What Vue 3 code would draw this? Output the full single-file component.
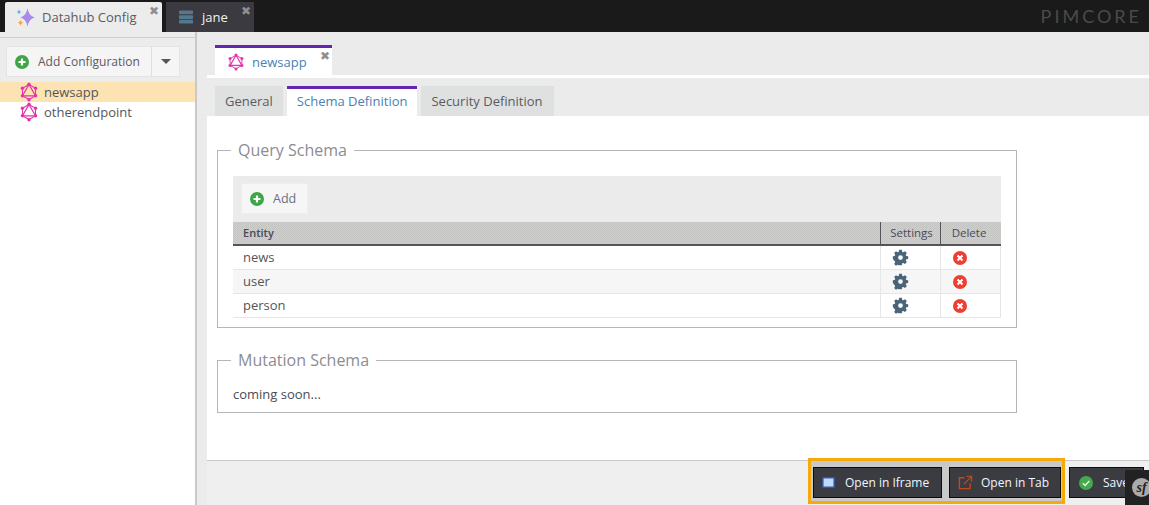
<script setup>
const entities = ['news', 'user', 'person']
const gear = 'M8.4 1h3.2l.4 2.3 1.3.6 2-1.3 2.2 2.2-1.3 2 .6 1.3 2.2.4v3.2l-2.2.5-.6 1.3 1.3 1.9-2.2 2.3-2-1.3-1.3.5-.4 2.3H8.4L8 19l-1.3-.5-2 1.3-2.2-2.3 1.3-1.9-.6-1.3L1 11.800V8.500l2.200-.4.6-1.300-1.300-2 2.200-2.200 2 1.300L8 3.300zM10 7.300a2.800 2.800 0 1 0 0 5.600 2.800 2.800 0 0 0 0-5.600z'
</script>

<template>
  <div class="app">
    <header class="topbar">
      <div class="toptab active">
        <svg class="star" viewBox="0 0 20 20" width="20" height="20">
          <path d="M12.500 1Q13.500 8.500 19.500 10.500 13.500 12.500 12.500 19.500 11.500 12.500 5.500 10.500 11.500 8.500 12.500 1z" fill="#a78bea" />
          <path d="M4 2.500Q4.400 4.600 6.300 5 4.400 5.400 4 7.500 3.600 5.400 1.700 5 3.600 4.600 4 2.500z" fill="#4fb2f0" />
          <path d="M5.500 13Q6 15.300 8 15.800 6 16.300 5.500 18.500 5 16.300 3 15.800 5 15.300 5.500 13z" fill="#f5a13c" />
        </svg>
        <span>Datahub Config</span>
        <i class="close">✖</i>
      </div>
      <div class="toptab dark">
        <svg viewBox="0 0 16 14" width="15" height="14">
          <rect x="0" y="0" width="15" height="4" rx="1" fill="#54788c" />
          <rect x="0" y="5" width="15" height="4" rx="1" fill="#54788c" />
          <rect x="0" y="10" width="15" height="4" rx="1" fill="#54788c" />
        </svg>
        <span>jane</span>
        <i class="close">✖</i>
      </div>
      <div class="logo">PIMCORE</div>
    </header>

    <div class="main">
      <aside class="sidebar">
        <div class="addbar">
          <div class="addbtn">
            <span class="addmain">
              <svg class="ic" viewBox="0 0 14 14" width="14" height="14">
                <circle cx="7" cy="7" r="7" fill="#3fa648" />
                <path d="M7 3.500v7M3.500 7h7" stroke="#fff" stroke-width="2.200" />
              </svg>
              Add Configuration
            </span>
            <span class="addcaret"><b></b></span>
          </div>
        </div>
        <div class="tree-row selected">
          <svg class="gql" viewBox="0 0 20 20" width="20" height="20"><use href="#gql" /></svg>
          <span>newsapp</span>
        </div>
        <div class="tree-row">
          <svg class="gql" viewBox="0 0 20 20" width="20" height="20"><use href="#gql" /></svg>
          <span>otherendpoint</span>
        </div>
      </aside>

      <section class="content">
        <div class="subtabs">
          <div class="subtab">
            <svg class="gql" viewBox="0 0 20 20" width="18" height="18"><use href="#gql" /></svg>
            <span>newsapp</span>
            <i class="close">✖</i>
          </div>
        </div>
        <div class="innertabs">
          <div class="itab">General</div>
          <div class="itab on">Schema Definition</div>
          <div class="itab">Security Definition</div>
        </div>

        <div class="panel">
          <fieldset class="fs">
            <legend>Query Schema</legend>
            <div class="toolbar">
              <div class="tbtn">
                <svg viewBox="0 0 14 14" width="14" height="14">
                  <circle cx="7" cy="7" r="7" fill="#3fa648" />
                  <path d="M7 3.500v7M3.500 7h7" stroke="#fff" stroke-width="2.200" />
                </svg>
                <span>Add</span>
              </div>
            </div>
            <div class="grid-row head">
              <div class="c1">Entity</div>
              <div class="c2">Settings</div>
              <div class="c3">Delete</div>
            </div>
            <div v-for="(e, i) in entities" :key="e" class="grid-row body" :class="{ alt: i === 1 }">
              <div class="c1">{{ e }}</div>
              <div class="c2">
                <svg viewBox="0 0 20 20" width="17" height="17"><path :d="gear" fill="#4a6577" fill-rule="evenodd" /></svg>
              </div>
              <div class="c3">
                <svg viewBox="0 0 14 14" width="14" height="14">
                  <circle cx="7" cy="7" r="7" fill="#ee3f33" />
                  <path d="M4.500 4.500l5 5M9.500 4.500l-5 5" stroke="#fff" stroke-width="2" />
                </svg>
              </div>
            </div>
          </fieldset>

          <fieldset class="fs second">
            <legend>Mutation Schema</legend>
            <div class="soon">coming soon...</div>
          </fieldset>
        </div>

        <footer class="footer">
          <div class="hl">
            <div class="dbtn frame">
              <svg viewBox="0 0 14 14" width="13" height="13">
                <rect x="1" y="2" width="12" height="10" fill="#bcdcfa" stroke="#3a55b4" stroke-width="1.400" />
              </svg>
              <span>Open in Iframe</span>
            </div>
            <div class="dbtn tab">
              <svg viewBox="0 0 16 16" width="15" height="15" fill="none" stroke="#c0491c" stroke-width="1.500">
                <path d="M7 3H1.500v11.500H13V9" />
                <path d="M6 10l8-8M9 1.500h5.500V7" />
              </svg>
              <span>Open in Tab</span>
            </div>
          </div>
          <div class="dbtn save">
            <svg viewBox="0 0 14 14" width="14" height="14">
              <circle cx="7" cy="7" r="7" fill="#45a94e" />
              <path d="M3.800 7.200l2.300 2.300 4.200-4.500" stroke="#e8f6d8" stroke-width="1.500" fill="none" />
            </svg>
            <span>Save</span>
          </div>
          <div class="sf"><span>sf</span></div>
        </footer>
      </section>
    </div>

    <svg class="defs" width="0" height="0">
      <defs>
        <g id="gql">
          <path d="M10 2.500L16.500 6.200v7.600L10 17.500 3.500 13.800V6.200z" fill="none" stroke="#e535ab" stroke-width="1.100" />
          <path d="M10 2.500L16.500 13.800H3.500z" fill="none" stroke="#e535ab" stroke-width="1.300" />
          <g fill="#e535ab">
            <circle cx="10" cy="2.300" r="1.700" />
            <circle cx="16.600" cy="6.200" r="1.700" />
            <circle cx="16.600" cy="13.800" r="1.700" />
            <circle cx="10" cy="17.700" r="1.700" />
            <circle cx="3.400" cy="13.800" r="1.700" />
            <circle cx="3.400" cy="6.200" r="1.700" />
          </g>
        </g>
      </defs>
    </svg>
  </div>
</template>

<style>
html, body { margin: 0; padding: 0; overflow: hidden; }
</style>

<style scoped>
.app {
  width: 1149px;
  height: 505px;
  display: flex;
  flex-direction: column;
  overflow: hidden;
  font-family: "Open Sans", "Liberation Sans", sans-serif;
  font-size: 13px;
  color: #4b4b52;
  background-color: #ebebeb;
  background-image: repeating-conic-gradient(#e8e8e8 0 25%, #eeeeee 0 50%);
  background-size: 2px 2px;
}
.defs { position: absolute; }
.topbar {
  flex: 0 0 32px;
  height: 32px;
  background: #1a1a1a;
  display: flex;
  align-items: flex-end;
  padding-left: 5px;
  gap: 4px;
  box-sizing: border-box;
}
.toptab {
  height: 30px;
  display: flex;
  align-items: center;
  position: relative;
  box-sizing: border-box;
}
.toptab.active {
  width: 157px;
  background: #ececec;
  padding-left: 10px;
  gap: 7px;
  color: #5b5b62;
  border-radius: 2px 2px 0 0;
}
.toptab.dark {
  width: 88px;
  background: #3a3a40;
  color: #f2f2f2;
  padding-left: 13px;
  gap: 8px;
}
.close {
  position: absolute;
  top: 2px;
  right: 3px;
  font-style: normal;
  font-size: 12px;
  line-height: 14px;
  color: #8f8f8f;
  font-family: "DejaVu Sans", sans-serif;
}
.logo {
  margin-left: auto;
  margin-right: 7px;
  align-self: center;
  font-family: "Lato", sans-serif;
  font-weight: 400;
  font-size: 18px;
  letter-spacing: 3px;
  color: #4a4a4a;
}
.main {
  flex: 1;
  display: flex;
  min-height: 0;
}
.sidebar {
  width: 195px;
  flex: none;
  background: #fff;
  border-right: 2px solid #c9c9c9;
}
.addbar {
  height: 50px;
  box-sizing: border-box;
  padding: 14px 0 0 6px;
  background-color: #ececec;
  background-image: linear-gradient(#ececec 5px, #cfcfcf 5px, #cfcfcf 6px, #ececec 6px);
}
.addbtn {
  width: 174px;
  height: 31px;
  background: #f5f5f5;
  border: 1px solid #e4e4e4;
  box-sizing: border-box;
  display: flex;
  font-size: 12px;
  color: #5a5a62;
}
.addmain {
  flex: 1;
  display: flex;
  align-items: center;
  gap: 9px;
  padding-left: 8px;
  border-right: 1px solid #dedede;
}
.addcaret {
  width: 27px;
  display: flex;
  align-items: center;
  justify-content: center;
}
.addcaret b {
  border-left: 5px solid transparent;
  border-right: 5px solid transparent;
  border-top: 5px solid #555;
}
.tree-row {
  height: 20px;
  display: flex;
  align-items: center;
  padding-left: 19px;
  gap: 5px;
  color: #55555c;
}
.tree-row.selected { background: #fde3b2; }
.content {
  flex: 1;
  min-width: 0;
  display: flex;
  flex-direction: column;
  padding-left: 10px;
}
.subtabs {
  height: 46px;
  box-sizing: border-box;
  padding: 13px 0 0 8px;
  border-bottom: 3px solid #fff;
  display: flex;
}
.subtab {
  width: 117px;
  height: 30px;
  background: #fff;
  border-top: 3px solid #6426b0;
  box-sizing: border-box;
  display: flex;
  align-items: center;
  padding: 0 0 0 12px;
  gap: 7px;
  position: relative;
  color: #4a7fb5;
}
.subtab .close { top: 1px; right: 2px; }
.innertabs {
  height: 38px;
  box-sizing: border-box;
  padding: 8px 0 0 8px;
  display: flex;
  gap: 4px;
}
.itab {
  height: 30px;
  padding: 2px 10px 0;
  line-height: 26px;
  background: #dfe1e1;
  box-sizing: border-box;
  color: #5a5a62;
}
.itab:last-child { padding-right: 11px; }
.itab.on {
  background: #fff;
  border-top: 3px solid #6426b0;
  padding-top: 0;
  line-height: 25px;
  color: #4a7fb5;
}
.panel {
  flex: 1;
  background: #fff;
  padding: 22px 0 0 10px;
  min-height: 0;
}
.fs {
  width: 800px;
  margin: 0;
  padding: 14px 15px 10px;
  border: 1px solid #b5b5b5;
  box-sizing: border-box;
  height: 190px;
  position: relative;
}
.fs legend {
  margin-left: -2px;
  padding: 0 7px;
  font-size: 16px;
  line-height: 24px;
  color: #8c8c94;
}
.fs.second {
  height: 65px;
  margin-top: 20px;
  padding-top: 12px;
}
.toolbar {
  height: 46px;
  background: #ebebeb;
  box-sizing: border-box;
  padding: 7px 8px;
}
.tbtn {
  width: 67px;
  height: 31px;
  background: #f6f6f6;
  border: 1px solid #eee;
  box-sizing: border-box;
  display: flex;
  align-items: center;
  padding-left: 8px;
  gap: 9px;
  font-size: 12.500px;
  color: #6a6f80;
}
.grid-row {
  display: flex;
  width: 768px;
  box-sizing: border-box;
}
.c1 { flex: 1; padding-left: 10px; }
.c2 { width: 60px; }
.c3 { width: 61px; }
.head {
  height: 24px;
  background-color: #c9c9c7;
  background-image: repeating-conic-gradient(#c2c2c0 0 25%, #d0d0ce 0 50%);
  background-size: 2px 2px;
  border-bottom: 2px solid #57535a;
  font-size: 11px;
  font-weight: 600;
  color: #49495a;
  line-height: 22px;
}
.head .c2, .head .c3 {
  text-align: center;
  border-left: 1px solid #57535a;
  box-sizing: border-box;
  font-weight: 400;
  font-size: 11.500px;
}
.head .c2 { padding-left: 2px; }
.head .c3 { padding-right: 4px; }
.body {
  height: 24px;
  border-bottom: 1px solid #e6e6e6;
  border-right: 1px solid #e6e6e6;
  line-height: 23px;
  color: #55555c;
}
.body.alt { background: #f6f6f6; }
.body .c2, .body .c3 {
  display: flex;
  align-items: center;
  padding-left: 11px;
  border-left: 1px solid #e6e6e6;
  box-sizing: border-box;
}
.body .c3 { width: 60px; padding-left: 12px; }
.soon { line-height: 20px; font-size: 13px; color: #4b4b52; }
.footer {
  flex: 0 0 45px;
  height: 45px;
  box-sizing: border-box;
  background: #efefef;
  border-top: 1px solid #c8c8c8;
  display: flex;
  align-items: flex-start;
  padding-left: 601px;
  position: relative;
}
.hl {
  margin-top: -3px;
  height: 46px;
  width: 257px;
  box-sizing: border-box;
  border: 3px solid #f5a90a;
  background: #c9c9c9;
  display: flex;
  padding: 6px 0 0 2px;
  gap: 7px;
}
.dbtn {
  height: 31px;
  box-sizing: border-box;
  background: #3b3b42;
  border: 1px solid #0c0c0c;
  color: #f1f6ff;
  display: flex;
  align-items: center;
  font-size: 12px;
  padding-left: 8px;
  flex: none;
}
.dbtn.frame { width: 129px; gap: 10px; }
.dbtn.tab { width: 112px; gap: 8px; }
.dbtn.save {
  width: 75px;
  margin: 6px 0 0 4px;
  padding-left: 9px;
  gap: 10px;
}
.sf {
  position: absolute;
  right: 0;
  top: 9px;
  width: 24px;
  height: 36px;
  background: #222;
  overflow: hidden;
}
.sf span {
  position: absolute;
  left: 7px;
  top: 8px;
  width: 19px;
  height: 19px;
  border-radius: 50%;
  background: #aaa;
  color: #222;
  font-family: "Liberation Serif", serif;
  font-style: italic;
  font-weight: 700;
  font-size: 14px;
  line-height: 19px;
  text-align: center;
}
</style>
